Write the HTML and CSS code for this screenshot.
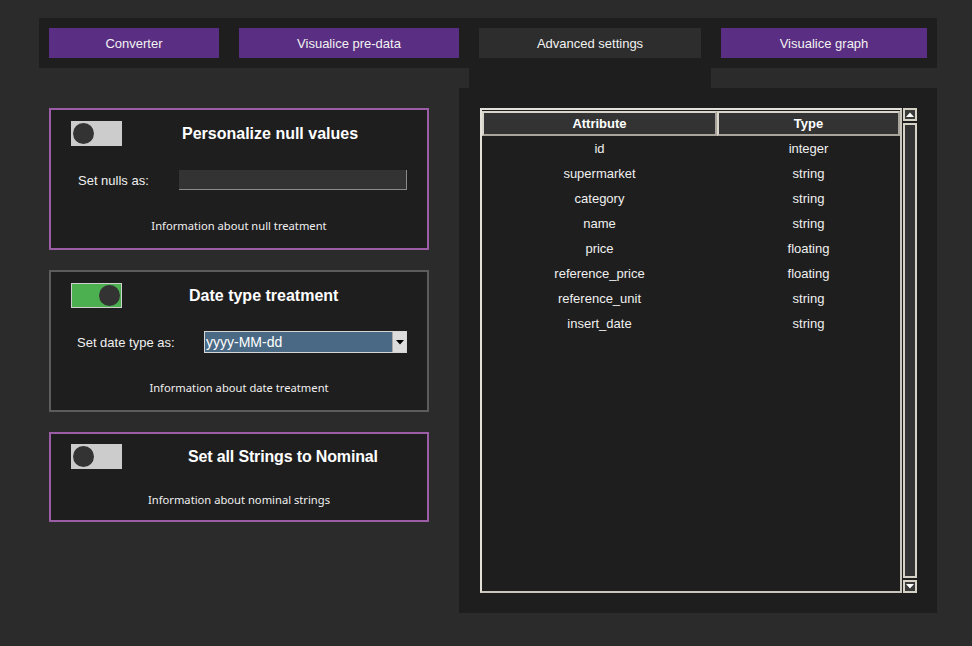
FILE: index.html
```html
<!DOCTYPE html>
<html>
<head>
<meta charset="utf-8">
<link rel="stylesheet" href="styles.css">
</head>
<body>
<div class="app">
  <div class="tabbar">
    <div class="tab tab-converter">Converter</div>
    <div class="tab tab-predata">Visualice pre-data</div>
    <div class="tab tab-active">Advanced settings</div>
    <div class="tab tab-graph">Visualice graph</div>
  </div>
  <div class="content">
    <div class="left">
      <div class="card card-purple card-null">
        <div class="card-head">
          <div class="toggle"><span class="knob"></span></div>
          <div class="title title-null">Personalize null values</div>
        </div>
        <div class="field-row field-null">
          <span class="label">Set nulls as:</span>
          <div class="text-input"></div>
        </div>
        <div class="info info-null">Information about null treatment</div>
      </div>
      <div class="card card-grey card-date">
        <div class="card-head">
          <div class="toggle toggle-on"><span class="knob"></span></div>
          <div class="title title-date">Date type treatment</div>
        </div>
        <div class="field-row field-date">
          <span class="label">Set date type as:</span>
          <div class="select">
            <span class="select-value">yyyy-MM-dd</span>
            <span class="select-btn"><svg width="8" height="5" viewBox="0 0 8 5"><path d="M0 0h8L4 4.5z" fill="#000"/></svg></span>
          </div>
        </div>
        <div class="info info-date">Information about date treatment</div>
      </div>
      <div class="card card-purple card-nominal">
        <div class="card-head">
          <div class="toggle"><span class="knob"></span></div>
          <div class="title title-nominal">Set all Strings to Nominal</div>
        </div>
        <div class="info info-nominal">Information about nominal strings</div>
      </div>
    </div>
    <div class="right">
      <div class="tab-neck"></div>
      <div class="panel">
        <div class="table-wrap">
          <table class="attr-table">
            <colgroup><col class="col-attr"><col class="col-type"></colgroup>
            <thead>
              <tr><th>Attribute</th><th>Type</th></tr>
            </thead>
            <tbody>
              <tr><td>id</td><td>integer</td></tr>
              <tr><td>supermarket</td><td>string</td></tr>
              <tr><td>category</td><td>string</td></tr>
              <tr><td>name</td><td>string</td></tr>
              <tr><td>price</td><td>floating</td></tr>
              <tr><td>reference_price</td><td>floating</td></tr>
              <tr><td>reference_unit</td><td>string</td></tr>
              <tr><td>insert_date</td><td>string</td></tr>
            </tbody>
          </table>
        </div>
        <div class="scrollbar">
          <div class="sb-btn"><svg width="8" height="5" viewBox="0 0 8 5"><path d="M0 5h8L4 0.5z" fill="#fff"/></svg></div>
          <div class="sb-track"></div>
          <div class="sb-btn"><svg width="8" height="5" viewBox="0 0 8 5"><path d="M0 0h8L4 4.5z" fill="#fff"/></svg></div>
        </div>
      </div>
    </div>
  </div>
</div>
</body>
</html>
```

FILE: styles.css
```css
* { box-sizing: border-box; }
html, body { margin: 0; padding: 0; }
body {
  background: #2b2b2b;
  font-family: "Liberation Sans", Arial, sans-serif;
  color: #f0f0f0;
  width: 972px;
  height: 646px;
  overflow: hidden;
}
.app {
  padding: 18px 0 0 39px;
}
.tabbar {
  width: 898px;
  height: 50px;
  background: #1e1e1e;
  padding: 10px;
  display: flex;
  gap: 20px;
}
.tab {
  height: 30px;
  display: flex;
  align-items: center;
  justify-content: center;
  font-size: 13px;
  color: #f2f2f2;
  background: #5a2e82;
}
.tab-converter { width: 170px; }
.tab-predata { width: 220px; }
.tab-active { width: 222px; background: #2d2d2d; }
.tab-graph { width: 206px; }

.content {
  display: flex;
  gap: 30px;
}
.left {
  margin-left: 10px;
  padding-top: 40px;
  width: 380px;
  display: flex;
  flex-direction: column;
  gap: 20px;
}
.card {
  background: #1e1e1e;
  border: 2px solid #9b5ea6;
  display: flex;
  flex-direction: column;
}
.card-grey { border-color: #5c5c5c; }
.card-null { height: 142px; padding: 11px 0 0 0; }
.card-date { height: 142px; padding: 11px 0 0 0; }
.card-nominal { height: 90px; padding: 10px 0 0 0; }

.card-head {
  display: flex;
  align-items: center;
  height: 25px;
  padding-left: 20px;
}
.toggle {
  width: 51px;
  height: 25px;
  background: #cccccc;
  position: relative;
  flex: none;
}
.knob {
  position: absolute;
  left: 2px;
  top: 2px;
  width: 21px;
  height: 21px;
  border-radius: 50%;
  background: #333333;
}
.toggle-on {
  background: #4caf50;
  border: 1px solid #cfcfcf;
}
.toggle-on .knob {
  left: auto;
  right: 1px;
  top: 1px;
}
.title {
  font-weight: bold;
  font-size: 16px;
  color: #ffffff;
  white-space: nowrap;
}
.title-null { margin-left: 60px; }
.title-date { margin-left: 67px; }
.title-nominal { margin-left: 66px; letter-spacing: -0.15px; }

.field-row {
  display: flex;
  align-items: center;
}
.label {
  font-size: 13px;
  color: #f0f0f0;
}
.field-null { margin-top: 24px; padding-left: 27px; }
.field-null .label { width: 101px; }
.text-input {
  width: 228px;
  height: 20px;
  background: #333333;
  border-right: 1px solid #8a8a8a;
  border-bottom: 1px solid #8a8a8a;
}
.field-date { margin-top: 23px; padding-left: 26px; }
.field-date .label { width: 127px; }
.select {
  width: 203px;
  height: 22px;
  display: flex;
  border: 1px solid #d6d6d6;
  background: #4a6984;
}
.select-value {
  flex: 1;
  font-size: 14px;
  color: #ffffff;
  line-height: 20px;
  padding-left: 1px;
}
.select-btn {
  width: 14px;
  background: #dcdcdc;
  border-left: 1px solid #a8a8a8;
  display: flex;
  align-items: center;
  justify-content: center;
}
.info {
  font-family: "Noto Sans", "Open Sans", sans-serif;
  font-size: 11.2px;
  line-height: 16px;
  text-align: center;
  color: #f0f0f0;
}
.info-null { margin-top: 28px; }
.info-date { margin-top: 27px; }
.info-nominal { margin-top: 23px; }

.right {
  display: flex;
  flex-direction: column;
}
.tab-neck {
  width: 242px;
  height: 20px;
  margin-left: 10px;
  background: #1e1e1e;
}
.panel {
  width: 478px;
  height: 525px;
  background: #1e1e1e;
  padding: 20px 20px 0 21px;
  display: flex;
  gap: 1px;
}
.table-wrap {
  width: 422px;
  height: 485px;
  border: 2px solid #e4e1d8;
  border-right-color: #c9c5bb;
  border-bottom-color: #c9c5bb;
  background: #1e1e1e;
}
.attr-table {
  width: 418px;
  border-collapse: separate;
  border-spacing: 0;
  table-layout: fixed;
  margin-top: 1px;
}
.col-attr { width: 235px; }
.col-type { width: 183px; }
.attr-table th {
  height: 25px;
  padding: 0;
  background: #333333;
  border: 2px solid #d9d5cb;
  border-right-color: #a9a59c;
  border-bottom-color: #a9a59c;
  font-size: 13px;
  font-weight: bold;
  color: #ffffff;
  text-align: center;
}
.attr-table td {
  height: 25px;
  padding: 0;
  font-size: 13px;
  text-align: center;
  color: #f0f0f0;
}
.scrollbar {
  width: 14px;
  height: 485px;
  display: flex;
  flex-direction: column;
  gap: 2px;
}
.sb-btn {
  height: 13px;
  background: #3a3a3a;
  border: 2px solid #d6d2c6;
  display: flex;
  align-items: center;
  justify-content: center;
  flex: none;
}
.sb-track {
  flex: 1;
  background: #333333;
  border: 2px solid #d6d2c6;
}
```
